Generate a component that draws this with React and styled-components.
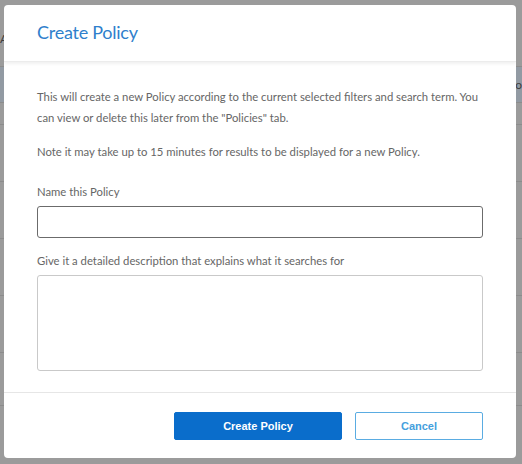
import React from "react";
import styled, { createGlobalStyle } from "styled-components";

const GlobalStyle = createGlobalStyle`
  html, body {
    margin: 0;
    padding: 0;
    width: 522px;
    height: 464px;
    overflow: hidden;
    background: #9b9b9b;
  }
`;

const Page = styled.div`
  position: relative;
  width: 522px;
  height: 464px;
  font-family: Lato, "Open Sans", sans-serif;
`;

const BackTable = styled.div`
  display: flex;
  flex-direction: column;
  padding-top: 10px;
`;

const BackRow = styled.div`
  height: ${(p) => p.h}px;
  border-bottom: 1px solid #8c8c8c;
  background: ${(p) => (p.active ? "#929aa3" : "transparent")};
  color: #3d3d3d;
  font-size: 12px;
  display: flex;
  align-items: center;
  justify-content: space-between;
`;

const Overlay = styled.div`
  position: absolute;
  inset: 0;
  display: flex;
  padding: 5px 6px 6px 4px;
  box-sizing: border-box;
`;

const Modal = styled.div`
  flex: 1;
  background: #fff;
  border-radius: 4px;
  display: flex;
  flex-direction: column;
  overflow: hidden;
`;

const Header = styled.div`
  height: 57px;
  box-sizing: border-box;
  padding: 0 33px;
  display: flex;
  align-items: center;
  border-bottom: 1px solid #ececec;
  box-shadow: 0 2px 3px rgba(0, 0, 0, 0.06);
`;

const Title = styled.h2`
  margin: 0;
  font-size: 18px;
  letter-spacing: -0.25px;
  font-weight: 400;
  color: #2f7fcc;
  padding-bottom: 2px;
`;

const Body = styled.div`
  flex: 1;
  padding: 24px 33px 0;
  display: flex;
  flex-direction: column;
  border-bottom: 1px solid #e6e6e6;
`;

const Text = styled.p`
  margin: 0 0 ${(p) => p.mb || 0}px;
  font-size: 11.3px;
  line-height: 21px;
  color: #666;
`;

const Label = styled.label`
  display: block;
  font-size: 11.3px;
  line-height: 16px;
  color: #666;
  margin-bottom: 6px;
`;

const Input = styled.input`
  box-sizing: border-box;
  width: 446px;
  height: 32px;
  border: 1px solid #6b6b6b;
  border-radius: 3px;
  margin-bottom: 15px;
  outline: none;
`;

const TextArea = styled.textarea`
  box-sizing: border-box;
  width: 446px;
  height: 96px;
  border: 1px solid #c9c9c9;
  border-radius: 3px;
  resize: none;
  outline: none;
`;

const Footer = styled.div`
  height: 65px;
  box-sizing: border-box;
  display: flex;
  justify-content: flex-end;
  align-items: flex-start;
  gap: 13px;
  padding: 19px 33px 0;
`;

const Button = styled.button`
  height: 28px;
  width: ${(p) => p.w}px;
  border-radius: 2px;
  font-family: "Liberation Sans", Arial, sans-serif;
  font-size: 11px;
  font-weight: 700;
  cursor: pointer;
  background: ${(p) => (p.primary ? "#0a6dcb" : "#fff")};
  color: ${(p) => (p.primary ? "#fff" : "#45a0dd")};
  border: 1px solid ${(p) => (p.primary ? "#0a6dcb" : "#5aace2")};
`;

const rows = [
  { h: 56, left: "A" },
  { h: 35, right: "o", active: true },
  { h: 21 },
  { h: 56 },
  { h: 56 },
  { h: 56 },
  { h: 56 },
  { h: 52 },
];

export default function App() {
  return (
    <Page>
      <GlobalStyle />
      <BackTable>
        {rows.map((r, i) => (
          <BackRow key={i} h={r.h} active={r.active}>
            <span>{r.left}</span>
            <span>{r.right}</span>
          </BackRow>
        ))}
      </BackTable>
      <Overlay>
        <Modal>
          <Header>
            <Title>Create Policy</Title>
          </Header>
          <Body>
            <Text mb={13}>
              This will create a new Policy according to the current selected
              filters and search term. You can view or delete this later from
              the "Policies" tab.
            </Text>
            <Text mb={22}>
              Note it may take up to 15 minutes for results to be displayed for a
              new Policy.
            </Text>
            <Label>Name this Policy</Label>
            <Input />
            <Label>Give it a detailed description that explains what it searches for</Label>
            <TextArea />
          </Body>
          <Footer>
            <Button primary w={168}>Create Policy</Button>
            <Button w={128}>Cancel</Button>
          </Footer>
        </Modal>
      </Overlay>
    </Page>
  );
}
